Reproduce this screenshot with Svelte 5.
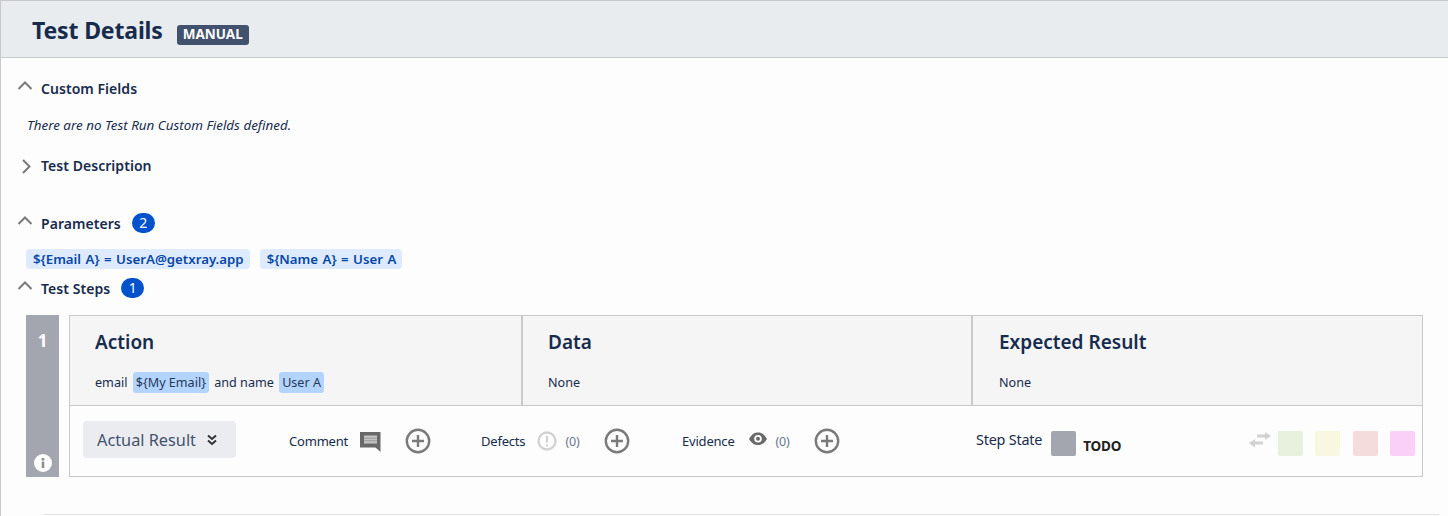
<script>
  const params = ["${Email A} = UserA@getxray.app", "${Name A} = User A"];
  const swatches = ["#e8f1de", "#f8f7df", "#f4dcdc", "#fbd0f8"];
</script>

{#snippet chevron(open)}
  <svg class="chev" class:closed={!open} width="16" height="16" viewBox="0 0 16 16">
    {#if open}
      <path d="M1.5 11 L8 4.5 L14.5 11" />
    {:else}
      <path d="M6 2 L12.5 8.5 L6 15" />
    {/if}
  </svg>
{/snippet}

{#snippet plus()}
  <svg class="plus" width="26" height="26" viewBox="0 0 26 26">
    <circle cx="13" cy="13" r="11.2" />
    <path d="M7 13 H19 M13 7 V19" />
  </svg>
{/snippet}

<div class="page">
  <header class="head">
    <h1>Test Details</h1>
    <span class="kind">MANUAL</span>
  </header>

  <main class="body">
    <section class="sec first">
      <div class="sec-title">{@render chevron(true)}<h2>Custom Fields</h2></div>
      <p class="empty">There are no Test Run Custom Fields defined.</p>
    </section>

    <section class="sec desc">
      <div class="sec-title">{@render chevron(false)}<h2>Test Description</h2></div>
    </section>

    <section class="sec params">
      <div class="sec-title">{@render chevron(true)}<h2>Parameters</h2><span class="count">2</span></div>
      <div class="chips">
        {#each params as p}
          <span class="chip">{p}</span>
        {/each}
      </div>
    </section>

    <section class="sec steps">
      <div class="sec-title">{@render chevron(true)}<h2>Test Steps</h2><span class="count">1</span></div>
      <div class="step">
        <div class="step-num">
          <span>1</span>
          <svg width="18" height="18" viewBox="0 0 18 18">
            <circle cx="9" cy="9" r="9" fill="#fff" />
            <rect x="7.7" y="7.6" width="2.6" height="6.4" fill="#8a8d94" />
            <rect x="7.7" y="4" width="2.6" height="2.6" fill="#8a8d94" />
          </svg>
        </div>
        <div class="step-box">
          <div class="cols">
            <div class="col c1">
              <h3>Action</h3>
              <p>email <mark>{"${My Email}"}</mark> and name <mark>User A</mark></p>
            </div>
            <div class="col c2">
              <h3>Data</h3>
              <p>None</p>
            </div>
            <div class="col c3">
              <h3>Expected Result</h3>
              <p>None</p>
            </div>
          </div>
          <div class="result">
            <button class="actual">
              Actual Result
              <svg width="12" height="12" viewBox="0 0 12 12"><path d="M2 1.5 L6 5 L10 1.5 M2 6.5 L6 10 L10 6.5" /></svg>
            </button>
            <div class="group comment">
              <span>Comment</span>
              <svg width="21" height="21" viewBox="0 0 21 21">
                <path d="M0 1 H20.5 V21 L15.5 16.5 H0 Z" fill="#696969" />
                <rect x="4" y="4.5" width="13" height="8" fill="#c4c4c4" />
                <path d="M4 7.2 H17 M4 9.8 H17" stroke="#8e8e8e" stroke-width="0.8" />
              </svg>
              {@render plus()}
            </div>
            <div class="group defects">
              <span>Defects</span>
              <svg width="20" height="20" viewBox="0 0 20 20">
                <circle cx="10" cy="10" r="8.5" fill="none" stroke="#d2d2d2" stroke-width="2.4" />
                <path d="M10 5 V11.5 M10 13.4 V15.4" stroke="#d2d2d2" stroke-width="2.2" />
              </svg>
              <span class="num">(0)</span>
              {@render plus()}
            </div>
            <div class="group evidence">
              <span>Evidence</span>
              <svg width="18" height="14" viewBox="0 0 18 14">
                <path d="M0 7 C3 1.5 6 0.5 9 0.5 C12 0.5 15 1.5 18 7 C15 12 12 13 9 13 C6 13 3 12 0 7 Z" fill="#696969" />
                <circle cx="9" cy="6.8" r="3.8" fill="#fff" />
                <circle cx="9" cy="6.8" r="2" fill="#696969" />
              </svg>
              <span class="num">(0)</span>
              {@render plus()}
            </div>
            <div class="group state">
              <span>Step State</span>
              <i class="square"></i>
              <b>TODO</b>
            </div>
            <div class="swatches">
              <svg width="22" height="17" viewBox="0 0 22 17">
                <path d="M8 2.4 H16 V0 L22 4 L16 8 V5.6 H8 Z" fill="#d2d2d2" />
                <path d="M14 9.4 H6 V7 L0 11 L6 15.5 V12.6 H14 Z" fill="#d2d2d2" />
              </svg>
              {#each swatches as color, i}
                <i class="square sw{i}" style="background:{color}"></i>
              {/each}
            </div>
          </div>
        </div>
      </div>
      <div class="rule"></div>
    </section>
  </main>
</div>

<style>
  :global(body) {
    margin: 0;
    background: #fdfdfd;
  }
  .page {
    height: 516px;
    overflow: hidden;
    box-sizing: border-box;
    border-left: 1px solid #c9c9c9;
    border-top: 1px solid #c9c9c9;
    font-family: "Noto Sans", "Open Sans", sans-serif;
    color: #172b4d;
    font-size: 13px;
  }
  .head {
    height: 57px;
    box-sizing: border-box;
    background: #e9ecee;
    border-bottom: 1px solid #c9c9c9;
    display: flex;
    align-items: center;
    padding-left: 31px;
  }
  h1 {
    margin: 2px 14px 0 0;
    font-size: 23px;
    font-weight: 700;
    letter-spacing: -0.15px;
    color: #172b4d;
  }
  .kind {
    background: #42526e;
    color: #fff;
    font-size: 13.5px;
    font-weight: 700;
    line-height: 19px;
    height: 20px;
    padding: 0 6px;
    border-radius: 3px;
    margin-top: 11px;
  }
  .sec {
    padding-left: 16px;
  }
  .sec-title {
    display: flex;
    align-items: center;
    height: 24px;
  }
  h2 {
    margin: 0 0 0 8px;
    font-size: 14px;
    font-weight: 600;
    letter-spacing: 0.05px;
    color: #172b4d;
  }
  .chev {
    fill: none;
    stroke: #7a7a7a;
    stroke-width: 2;
    margin-top: -4px;
    flex: none;
  }
  .chev.closed {
    margin-top: 2px;
  }
  .first {
    padding-top: 18px;
  }
  .empty {
    margin: 16px 0 0 10px;
    font-size: 13.4px;
    font-style: italic;
    line-height: 18px;
  }
  .desc {
    padding-top: 19px;
  }
  .params {
    padding-top: 34px;
  }
  .count {
    background: #0052cc;
    color: #fff;
    font-size: 14px;
    width: 23px;
    height: 20px;
    line-height: 20px;
    border-radius: 10px;
    text-align: center;
    margin-left: 11px;
  }
  .chips {
    display: flex;
    gap: 10px;
    margin: 14px 0 0 9px;
  }
  .chip {
    background: #deebff;
    color: #0747a6;
    font-weight: 600;
    font-size: 13.25px;
    word-spacing: 1px;
    line-height: 20px;
    padding: 0 6px 0 7px;
    border-radius: 4px;
  }
  .steps {
    padding-top: 7px;
  }
  .step {
    display: flex;
    margin: 15px 25px 0 9px;
    height: 162px;
  }
  .step-num {
    width: 33px;
    flex: none;
    background: #a3a6ae;
    color: #fff;
    font-weight: 700;
    font-size: 17px;
    display: flex;
    flex-direction: column;
    align-items: center;
    justify-content: space-between;
    padding: 14px 0 5px;
    box-sizing: border-box;
    margin-right: 10px;
  }
  .step-box {
    flex: 1;
    border: 1px solid #c9c9c9;
    display: flex;
    flex-direction: column;
    min-width: 0;
  }
  .cols {
    display: flex;
    height: 89px;
    flex: none;
    background: #f5f5f5;
    border-bottom: 1px solid #c9c9c9;
  }
  .col {
    box-sizing: border-box;
    padding: 13px 0 0 25px;
    border-right: 2px solid #c9c9c9;
  }
  .c1 { width: 453px; }
  .c2 { width: 450px; }
  .c3 { flex: 1; border-right: 0; padding-left: 26px; }
  h3 {
    margin: 0;
    font-size: 19px;
    font-weight: 600;
    line-height: 26px;
    color: #172b4d;
  }
  .col p {
    margin: 18px 0 0;
    font-size: 12.6px;
    line-height: 20px;
  }
  mark {
    background: #b3d4ff;
    color: #253858;
    border-radius: 3px;
    padding: 2px 3px;
    margin: 0 2px;
  }
  .result {
    flex: 1;
    position: relative;
    display: flex;
    align-items: center;
    min-height: 0;
  }
  .actual {
    margin: -3px 0 0 13px;
    width: 153px;
    height: 37px;
    border: 0;
    border-radius: 4px;
    background: #ebecf0;
    color: #42526e;
    font: inherit;
    font-size: 16.3px;
    text-align: left;
    padding: 0 0 0 14px;
    display: flex;
    align-items: center;
    gap: 10px;
    flex: none;
  }
  .actual svg {
    fill: none;
    stroke: #333;
    stroke-width: 2;
  }
  .group {
    display: flex;
    align-items: center;
    flex: none;
    font-size: 13px;
    letter-spacing: -0.2px;
  }
  .comment { margin-left: 53px; gap: 10px; width: 192px; }
  .comment svg:first-of-type { margin-left: 2px; }
  .comment .plus { margin-left: 14px; }
  .defects { gap: 6px; width: 201px; }
  .defects svg:first-of-type { margin-left: 6px; }
  .defects .num { margin-left: 2px; }
  .defects .plus { margin-left: 19px; }
  .evidence { gap: 6px; width: 294px; }
  .evidence svg:first-of-type { margin: -4px 3px 0 8px; }
  .evidence .plus { margin-left: 18px; }
  .num {
    color: #6b778c;
    font-size: 12.5px;
  }
  .plus {
    fill: none;
    stroke: #7a7a7a;
    stroke-width: 2.4;
    flex: none;
  }
  .state span {
    font-size: 14.4px;
    margin-top: -4px;
  }
  .state .square {
    background: #a3a6ae;
    margin: 5px 7px 0 9px;
  }
  .state b {
    font-size: 13.5px;
    color: #222;
    margin-top: 9px;
    font-weight: 700;
  }
  .square {
    display: block;
    width: 25px;
    height: 25px;
    border-radius: 2px;
    flex: none;
  }
  .swatches {
    position: absolute;
    right: 7px;
    top: 25px;
    display: flex;
    align-items: center;
    gap: 12px;
  }
  .swatches svg {
    margin-right: -5px;
    margin-top: -6px;
  }
  .sw1 { margin-right: 1px; }
  .rule {
    margin: 37px 9px 0 27px;
    border-top: 1px solid #dfe1e6;
  }
</style>
